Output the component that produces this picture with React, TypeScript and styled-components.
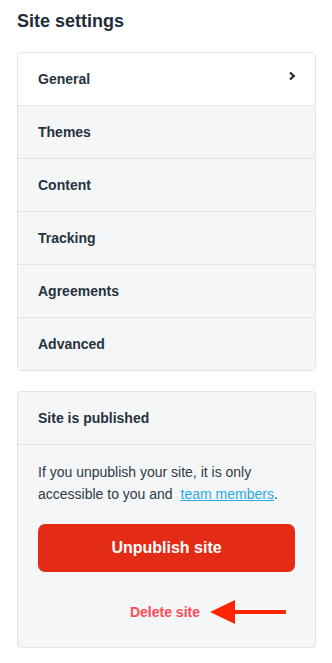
import styled, { createGlobalStyle } from 'styled-components';

const GlobalStyle = createGlobalStyle`
  html, body {
    margin: 0;
    padding: 0;
    background: #ffffff;
  }
  body {
    font-family: 'Liberation Sans', Arial, Helvetica, sans-serif;
    color: #26323d;
  }
`;

const Page = styled.div`
  width: 332px;
  padding: 11px 16px 16px 17px;
  box-sizing: border-box;
`;

const Heading = styled.h1`
  margin: 0 0 21px 0;
  font-size: 18px;
  line-height: 20px;
  font-weight: 700;
  color: #1f2d3a;
`;

const Card = styled.div`
  border: 1px solid #e1e4e8;
  border-radius: 4px;
  background: #f5f6f8;
  overflow: hidden;
  margin-bottom: 20px;
`;

const MenuRow = styled.div<{ $active?: boolean }>`
  display: flex;
  align-items: center;
  justify-content: space-between;
  height: 52px;
  padding: 0 18px 0 20px;
  background: ${({ $active }) => ($active ? '#ffffff' : '#f5f6f8')};
  font-size: 14px;
  font-weight: 700;
  color: #26323d;
  & + & {
    border-top: 1px solid #e1e4e8;
  }
`;

const Chevron = styled.svg`
  width: 10px;
  height: 10px;
  margin-top: -6px;
`;

const CardHeader = styled.div`
  height: 52px;
  display: flex;
  align-items: center;
  padding: 0 20px;
  font-size: 14px;
  font-weight: 700;
  color: #26323d;
  border-bottom: 1px solid #e1e4e8;
`;

const CardBody = styled.div`
  padding: 16px 20px 22px 20px;
  display: flex;
  flex-direction: column;
`;

const Text = styled.p`
  margin: 0;
  font-size: 14px;
  line-height: 22px;
  color: #2e3a45;
`;

const TextLink = styled.a`
  color: #29a9e8;
  text-decoration: underline;
  margin-left: 4px;
`;

const DangerButton = styled.button`
  margin-top: 19px;
  height: 48px;
  width: 100%;
  border: none;
  border-radius: 7px;
  background: #e32b15;
  color: #ffffff;
  font-family: inherit;
  font-size: 16px;
  font-weight: 700;
`;

const DeleteRow = styled.div`
  display: flex;
  align-items: center;
  justify-content: flex-end;
  margin-top: 27px;
  margin-right: 9px;
  gap: 10px;
`;

const DeleteLink = styled.span`
  font-size: 14px;
  font-weight: 700;
  color: #ff4b57;
`;

const Arrow = styled.svg`
  width: 76px;
  height: 26px;
`;

const menu = ['General', 'Themes', 'Content', 'Tracking', 'Agreements', 'Advanced'];

function App() {
  return (
    <>
      <GlobalStyle />
      <Page>
        <Heading>Site settings</Heading>
        <Card>
          {menu.map((item, i) => (
            <MenuRow key={item} $active={i === 0}>
              {item}
              {i === 0 && (
                <Chevron viewBox="0 0 10 10">
                  <path d="M3 1.5 L6.8 5 L3 8.5" fill="none" stroke="#1f2d3a" strokeWidth="2.2" />
                </Chevron>
              )}
            </MenuRow>
          ))}
        </Card>
        <Card>
          <CardHeader>Site is published</CardHeader>
          <CardBody>
            <Text>
              If you unpublish your site, it is only accessible to you and{' '}
              <TextLink href="#">team members</TextLink>.
            </Text>
            <DangerButton>Unpublish site</DangerButton>
            <DeleteRow>
              <DeleteLink>Delete site</DeleteLink>
              <Arrow viewBox="0 0 76 26">
                <polygon points="0,13 25,1 25,25" fill="#ff2600" />
                <rect x="24" y="11" width="52" height="4" fill="#ff2600" />
              </Arrow>
            </DeleteRow>
          </CardBody>
        </Card>
      </Page>
    </>
  );
}

export default App;
